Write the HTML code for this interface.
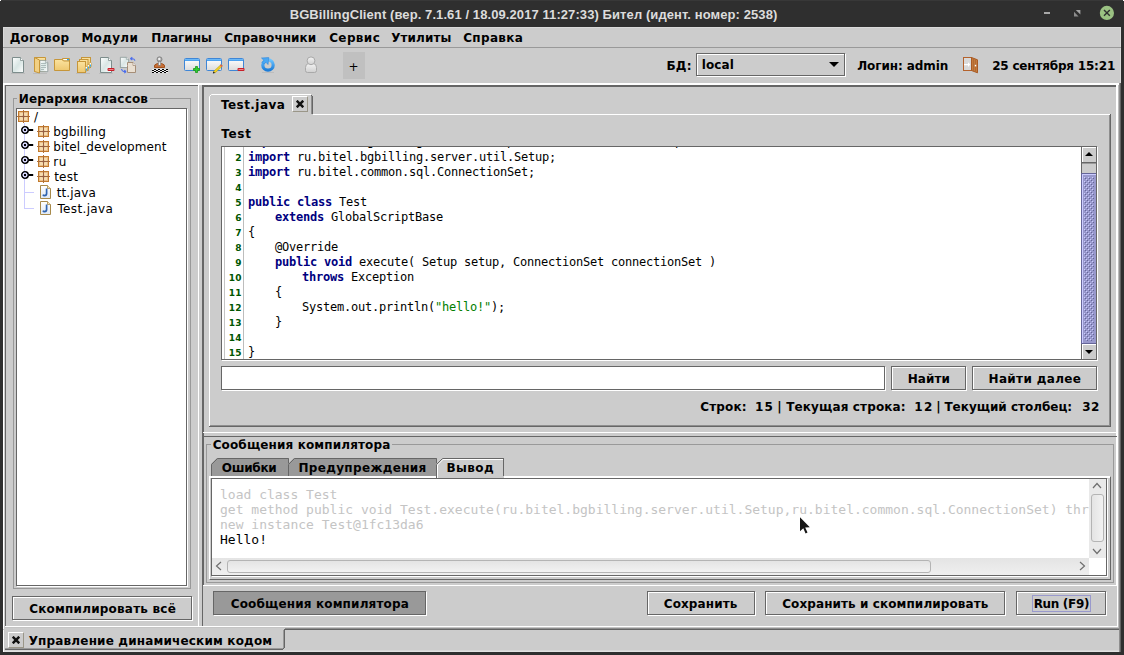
<!DOCTYPE html>
<html><head><meta charset="utf-8"><title>BGBillingClient</title>
<style>
*{box-sizing:border-box;margin:0;padding:0}
html,body{width:1124px;height:655px;overflow:hidden;background:#2f2f2f}
body{position:relative;font-family:"DejaVu Sans","Liberation Sans",sans-serif;font-size:12px;color:#000}
.a{position:absolute}
.t{position:absolute;white-space:pre;line-height:16px;height:16px}
.b{font-weight:bold;letter-spacing:.3px}
.mono{font-family:"DejaVu Sans Mono","Liberation Mono",monospace}
.btn{position:absolute;border:1px solid #666;background:#ccc;box-shadow:inset 1px 1px 0 #fff, 1px 1px 0 #fff;text-align:center;font-weight:bold;letter-spacing:.3px;white-space:pre}
.kw{color:#000080;font-weight:bold}
.str{color:#008000}
.hl{position:absolute;height:1px}
.vl{position:absolute;width:1px}
</style></head><body>
<div class="t" id="t0" style="left:289.68px;top:7px;letter-spacing:0.087px;font-size:13px;font-weight:bold;font-family:'Liberation Sans',sans-serif;color:#dcdcdc;">BGBillingClient (вер. 7.1.61 / 18.09.2017 11:27:33) Бител (идент. номер: 2538)</div>
<div class="a" style="left:1044px;top:12px;width:6px;height:2px;background:#a8a8a8"></div>
<svg class="a" style="left:1074px;top:10px" width="7" height="7" viewBox="0 0 7 7"><path d="M1.800 0H6.400V4.600Z" fill="#a4a4a4"/><path d="M0 1.800V6.400H4.600Z" fill="#8c8c8c"/></svg>
<svg class="a" style="left:1099px;top:5px" width="16" height="16" viewBox="0 0 16 16"><circle cx="7.900" cy="7.900" r="7.100" fill="#9ac182"/><path d="M5 5L10.800 10.800M10.800 5L5 10.800" stroke="#2f2f2f" stroke-width="1.400"/></svg>
<div class="a" style="left:0px;top:0px;width:1px;height:1px;background:#fff"></div>
<div class="a" style="left:1123px;top:0px;width:1px;height:1px;background:#fff"></div>
<div class="a" style="left:1px;top:0px;width:1122px;height:1px;background:#383838"></div>
<div class="a" style="left:3px;top:27px;width:1118px;height:625px;background:#ccc"></div>
<div class="a" style="left:3px;top:27px;width:1118px;height:1px;background:#d9d9d9"></div>
<div class="a" style="left:3px;top:27px;width:1px;height:56px;background:#d9d9d9"></div>
<div class="a" style="left:1120px;top:27px;width:1px;height:56px;background:#d9d9d9"></div>
<div class="a" style="left:3px;top:47px;width:1118px;height:1px;background:#999"></div>
<div class="t" id="t1" style="left:9.68px;top:30px;letter-spacing:0.237px;font-size:12px;font-weight:bold;">Договор</div>
<div class="t" id="t2" style="left:81.38px;top:30px;letter-spacing:0.307px;font-size:12px;font-weight:bold;">Модули</div>
<div class="t" id="t3" style="left:151.22px;top:30px;letter-spacing:-0.032px;font-size:12px;font-weight:bold;">Плагины</div>
<div class="t" id="t4" style="left:224.18px;top:30px;letter-spacing:0.098px;font-size:12px;font-weight:bold;">Справочники</div>
<div class="t" id="t5" style="left:329.18px;top:30px;letter-spacing:0.389px;font-size:12px;font-weight:bold;">Сервис</div>
<div class="t" id="t6" style="left:391.22px;top:30px;letter-spacing:0.073px;font-size:12px;font-weight:bold;">Утилиты</div>
<div class="t" id="t7" style="left:463.22px;top:30px;letter-spacing:0.329px;font-size:12px;font-weight:bold;">Справка</div>
<svg class="a" style="left:0;top:48px" width="1124" height="35" viewBox="0 48 1124 35">
<defs>
<linearGradient id="gd" x1="0" y1="0" x2="1" y2="1"><stop offset="0" stop-color="#fff"/><stop offset=".5" stop-color="#d9e6e4"/><stop offset="1" stop-color="#fff"/></linearGradient>
<linearGradient id="gf" x1="0" y1="0" x2="0" y2="1"><stop offset="0" stop-color="#fbe3a0"/><stop offset="1" stop-color="#eec870"/></linearGradient>
<linearGradient id="gw" x1="0" y1="0" x2="0" y2="1"><stop offset="0" stop-color="#fff"/><stop offset="1" stop-color="#dcdcdc"/></linearGradient>
<linearGradient id="gb" x1="0" y1="0" x2="0" y2="1"><stop offset="0" stop-color="#7cc4fb"/><stop offset="1" stop-color="#3c96ea"/></linearGradient>
<linearGradient id="gu" x1="0" y1="0" x2="0" y2="1"><stop offset="0" stop-color="#f4f4f4"/><stop offset="1" stop-color="#cfcfcf"/></linearGradient>
<linearGradient id="gr" x1="0" y1="0" x2="0" y2="1"><stop offset="0" stop-color="#6cc4ff"/><stop offset="1" stop-color="#1c7cd8"/></linearGradient>
<g id="doc"><path d="M0.5 0.5H8.5L11.5 3.5V15.5H0.5Z" fill="url(#gd)" stroke="#7d8d8c"/><path d="M8.5 0.5V3.5H11.5" fill="#fff" stroke="#7d8d8c" stroke-width=".8"/></g>
<g id="win"><rect x="0.5" y="0.5" width="15" height="12" rx="1" fill="url(#gw)" stroke="#3f86d6"/><path d="M1 1H15V3H1Z" fill="url(#gb)"/></g>
<g id="minus"><rect x="0" y="0" width="7" height="3" rx="1" fill="#c81e28"/><rect x="1" y="1" width="5" height="1" fill="#f08088"/></g>
</defs>
<!-- shadows -->
<g fill="#9a9a9a" opacity=".3"><rect x="11" y="73" width="14" height="1"/><rect x="33" y="73" width="14" height="1"/><rect x="99" y="73" width="14" height="1"/><rect x="76" y="73" width="14" height="1"/><rect x="262" y="72" width="12" height="1"/></g>
<!-- 1 new doc -->
<use href="#doc" x="12" y="57"/>
<!-- 2 folder with doc -->
<path d="M34.5 57.5H45.5V71.5H34.5Z" fill="url(#gf)" stroke="#c6963a"/>
<g transform="translate(39.5,60) scale(.72,.75)"><use href="#doc"/></g>
<path d="M41 63.5H46M41 65.5H46M41 67.5H46M41 69.5H44" stroke="#9fb0b0" stroke-width=".8"/>
<path d="M34.5 57.5L39.5 60V73L34.5 71.5Z" fill="#f2d083" stroke="#c6963a"/>
<!-- 3 folder -->
<path d="M62.5 58.5H69.5V61H62.5Z" fill="#f4d890" stroke="#c6963a"/>
<rect x="63.5" y="59" width="4" height="1.4" fill="#fff"/><rect x="67" y="59" width="2" height="1.4" fill="#28a8f0"/>
<path d="M54.5 59.5H62L63.5 61H69.5V70.5H54.5Z" fill="url(#gf)" stroke="#c6963a"/>
<!-- 4 stacked folders -->
<rect x="81.500" y="57.500" width="9" height="10" fill="url(#gf)" stroke="#c6963a"/>
<rect x="89.300" y="62.500" width="2" height="4.500" rx=".8" fill="#f4d890" stroke="#c6963a" stroke-width=".6"/><rect x="89.800" y="63" width="1.200" height="1.800" fill="#fff"/><rect x="89.800" y="64.600" width="1.200" height="2" fill="#28a8f0"/>
<rect x="79.500" y="59.500" width="8.500" height="11" fill="url(#gf)" stroke="#c6963a"/>
<rect x="87.300" y="64.500" width="2" height="4.500" rx=".8" fill="#f4d890" stroke="#c6963a" stroke-width=".6"/><rect x="87.800" y="65" width="1.200" height="1.800" fill="#fff"/><rect x="87.800" y="66.600" width="1.200" height="2" fill="#28a8f0"/>
<rect x="77.500" y="61.500" width="8" height="11" fill="url(#gf)" stroke="#c6963a"/>
<rect x="85.300" y="66.500" width="2" height="4.500" rx=".8" fill="#f4d890" stroke="#c6963a" stroke-width=".6"/><rect x="85.800" y="67" width="1.200" height="1.800" fill="#fff"/><rect x="85.800" y="68.600" width="1.200" height="2" fill="#28a8f0"/>
<!-- 5 doc minus -->
<use href="#doc" x="100" y="57"/>
<use href="#minus" x="107.500" y="68"/>
<!-- 6 two docs arrows -->
<g transform="translate(120,57) scale(.75,.68)"><use href="#doc"/></g>
<path d="M127.500 65.500V72.500H135.500V65.500L133 62.500H127.500Z" fill="#e9dfd1" stroke="#a58e78"/>
<path d="M133 62.500V65.500H135.500" fill="#fff" stroke="#a58e78" stroke-width=".8"/>
<path d="M130.500 58.600Q134.300 58 135 60.600M130.300 58.600L132.300 57.200M130.300 58.600L132.300 60" fill="none" stroke="#4a6cec" stroke-width="1.100"/>
<path d="M121.500 69Q122 72 126 71.600M126.200 71.600L124.300 70.100M126.200 71.600L124.300 73.100" fill="none" stroke="#4a6cec" stroke-width="1.100"/>
<!-- 7 stamp -->
<path d="M154.500 67.500V66Q154.500 64.600 156 64.200L157.500 63.500H161.500L163 64.200Q164.500 64.600 164.500 66V67.500Z" fill="#c87038" stroke="#a0501c"/>
<rect x="158.200" y="60" width="2.600" height="5.300" fill="#c4c4c4" stroke="#808080" stroke-width=".6"/>
<rect x="159" y="60" width=".9" height="5" fill="#f4f4f4"/>
<circle cx="159.500" cy="59.300" r="2.500" fill="#a4a4a4" stroke="#7c7c7c" stroke-width=".8"/>
<circle cx="159.300" cy="58.900" r="1.200" fill="#f0f0f0"/>
<g fill="#000"><rect x="152" y="69" width="16" height="4" fill="#eee"/>
<path d="M152 70h2v-1h2v1h2v-1h2v1h2v-1h2v1h2v-1h2v1h-2v1h-2v-1h-2v1h-2v-1h-2v1h-2v-1h-2v1h-2z"/>
<path d="M152 72h2v-1h2v1h2v-1h2v1h2v-1h2v1h2v-1h2v1h-2v1h-2v-1h-2v1h-2v-1h-2v1h-2v-1h-2v1h-2z"/></g>
<!-- 8 window plus -->
<use href="#win" x="184" y="58"/>
<path d="M195.500 66.500H197.500V68.500H199.500V70.500H197.500V72.500H195.500V70.500H193.500V68.500H195.500Z" fill="#2ed02e" stroke="#1a961a" stroke-width=".8"/>
<!-- 9 window pencil -->
<use href="#win" x="206" y="58"/>
<path d="M221 64.500L222.500 66L215 73L213.500 71.500Z" fill="#f0d020" stroke="#a89018" stroke-width=".5"/>
<path d="M220 65.500L221 64.500L222.500 66L221.500 67Z" fill="#e04858"/>
<path d="M213.500 71.500L215 73L212.800 73.600Z" fill="#111"/>
<!-- 10 window minus -->
<use href="#win" x="228" y="58"/>
<use href="#minus" x="237.500" y="68"/>
<!-- 11 refresh -->
<circle cx="268" cy="65" r="5.200" fill="none" stroke="url(#gr)" stroke-width="3.200"/>
<path d="M261 57.500H268.500V65Z" fill="#ccc"/>
<path d="M261.500 58L268.800 57.600L268 64.500L266 62.300L263.800 64.200L262 62.400L263.900 60.300Z" fill="#4aa8f4" stroke="#2c84da" stroke-width=".6"/>
<!-- 12 user -->
<path d="M305.500 70.500V67.500Q305.500 64 308.500 63.500H313.500Q316.500 64 316.500 67.500V70.500Q316.500 72.500 314.500 72.500H307.500Q305.500 72.500 305.500 70.500Z" fill="url(#gu)" stroke="#a9a9a9"/>
<circle cx="311" cy="60.800" r="3.900" fill="url(#gu)" stroke="#a9a9a9"/>
<!-- door -->
<rect x="963.500" y="57.500" width="8" height="13" fill="#d9d9d9" stroke="#b4622c"/>
<path d="M964 64H968V62.300L970.300 64.600L968 66.900V65.300H964Z" fill="#fff"/>
<path d="M971.500 57.500L977.500 59.800V72.800L971.500 70.500Z" fill="#c47a3c" stroke="#a85a24"/>
<path d="M973.500 59V70.700M975.500 59.800V71.400" stroke="#a96430" stroke-width=".7"/>
<rect x="974.800" y="64.800" width="1.400" height="1.600" fill="#fff"/>
</svg>
<div class="a" style="left:343px;top:52px;width:22px;height:27px;background:#c0c0c0"></div>
<div class="t" id="t8" style="left:348.50px;top:59px;letter-spacing:0.000px;font-size:12px;">+</div>
<div class="t" id="t9" style="left:666.38px;top:58px;letter-spacing:0.300px;font-size:12px;font-weight:bold;">БД:</div>
<div class="a" style="left:696px;top:53px;width:149px;height:23px;border:1px solid #666;box-shadow:inset 1px 1px 0 #fff,1px 1px 0 #fff"></div>
<div class="t" id="t10" style="left:701.68px;top:57px;letter-spacing:0.103px;font-size:12px;font-weight:bold;">local</div>
<svg class="a" style="left:829px;top:62px" width="10" height="5" viewBox="0 0 10 5"><path d="M0 0H10L5 5Z" fill="#000"/></svg>
<div class="t" id="t11" style="left:857.14px;top:58px;letter-spacing:-0.076px;font-size:12px;font-weight:bold;">Логин: admin</div>
<div class="t" id="t12" style="left:992.14px;top:58px;letter-spacing:-0.188px;font-size:12px;font-weight:bold;">25 сентября 15:21</div>
<div class="a" style="left:3px;top:83px;width:1118px;height:2px;background:#fff"></div>
<div class="a" style="left:3px;top:83px;width:1px;height:546px;background:#fff"></div>
<div class="a" style="left:5px;top:85px;width:1px;height:541px;background:#666"></div>
<div class="a" style="left:5px;top:85px;width:193px;height:1px;background:#666"></div>
<div class="a" style="left:198px;top:85px;width:1px;height:541px;background:#fff"></div>
<div class="a" style="left:5px;top:626px;width:1113px;height:1px;background:#fff"></div>
<div class="a" style="left:5px;top:627px;width:1113px;height:1px;background:#c4c4c4"></div>
<div class="a" style="left:1118px;top:85px;width:1px;height:543px;background:#bbb"></div>
<div class="a" style="left:1119px;top:83px;width:1px;height:569px;background:#8e8e8e"></div>
<div class="a" style="left:1120px;top:83px;width:1px;height:569px;background:#636363"></div>
<div class="a" style="left:13px;top:98px;width:178px;height:491px;border:1px solid #999"></div>
<div class="t" id="t13" style="left:18.68px;top:91px;letter-spacing:0.180px;font-size:12px;font-weight:bold;background:#ccc;padding:0 2px;margin-left:-2px">Иерархия классов</div>
<div class="a" style="left:16px;top:108px;width:171px;height:478px;background:#fff;border:1px solid #666;box-shadow:1px 1px 0 #fff"></div>
<div class="a" style="left:24px;top:123px;width:1px;height:86px;background:#ccf"></div>
<div class="a" style="left:24px;top:192px;width:10px;height:1px;background:#ccf"></div>
<div class="a" style="left:24px;top:208px;width:10px;height:1px;background:#ccf"></div>
<svg class="a" style="left:17px;top:110px" width="13" height="13" viewBox="0 0 13 13"><rect x="1.5" y="1.5" width="10" height="10" fill="#f6dcae" stroke="#c27a2c"/><rect x="2.5" y="2.5" width="8" height="8" fill="none" stroke="#e9bd85" stroke-width="1"/><path d="M6.500 0V13M0 6.500H13" stroke="#b0713a" stroke-width="1"/><path d="M6.500 2V11M2 6.500H11" stroke="#8c5a45" stroke-width="1" opacity=".55"/><rect x="5.500" y="5.500" width="2" height="2" fill="#8c5a45" opacity=".5"/></svg>
<div class="t" id="t14" style="left:34.00px;top:109px;letter-spacing:0.000px;font-size:12px;">/</div>
<svg class="a" style="left:21px;top:126px" width="13" height="9" viewBox="0 0 13 9"><circle cx="4" cy="4" r="3.200" fill="#ccf" stroke="#000" stroke-width="1.600"/><circle cx="4" cy="4" r="2.100" fill="none" stroke="#e6e6ff" stroke-width=".7"/><rect x="3" y="3" width="2" height="2" fill="#000"/><rect x="7.500" y="3" width="4.700" height="2" fill="#000"/></svg>
<svg class="a" style="left:37px;top:125px" width="13" height="13" viewBox="0 0 13 13"><rect x="1.5" y="1.5" width="10" height="10" fill="#f6dcae" stroke="#c27a2c"/><rect x="2.5" y="2.5" width="8" height="8" fill="none" stroke="#e9bd85" stroke-width="1"/><path d="M6.500 0V13M0 6.500H13" stroke="#b0713a" stroke-width="1"/><path d="M6.500 2V11M2 6.500H11" stroke="#8c5a45" stroke-width="1" opacity=".55"/><rect x="5.500" y="5.500" width="2" height="2" fill="#8c5a45" opacity=".5"/></svg>
<div class="t" id="t15" style="left:53.34px;top:124px;letter-spacing:0.132px;font-size:12px;">bgbilling</div>
<svg class="a" style="left:21px;top:141px" width="13" height="9" viewBox="0 0 13 9"><circle cx="4" cy="4" r="3.200" fill="#ccf" stroke="#000" stroke-width="1.600"/><circle cx="4" cy="4" r="2.100" fill="none" stroke="#e6e6ff" stroke-width=".7"/><rect x="3" y="3" width="2" height="2" fill="#000"/><rect x="7.500" y="3" width="4.700" height="2" fill="#000"/></svg>
<svg class="a" style="left:37px;top:140px" width="13" height="13" viewBox="0 0 13 13"><rect x="1.5" y="1.5" width="10" height="10" fill="#f6dcae" stroke="#c27a2c"/><rect x="2.5" y="2.5" width="8" height="8" fill="none" stroke="#e9bd85" stroke-width="1"/><path d="M6.500 0V13M0 6.500H13" stroke="#b0713a" stroke-width="1"/><path d="M6.500 2V11M2 6.500H11" stroke="#8c5a45" stroke-width="1" opacity=".55"/><rect x="5.500" y="5.500" width="2" height="2" fill="#8c5a45" opacity=".5"/></svg>
<div class="t" id="t16" style="left:53.34px;top:139px;letter-spacing:0.102px;font-size:12px;">bitel_development</div>
<svg class="a" style="left:21px;top:156px" width="13" height="9" viewBox="0 0 13 9"><circle cx="4" cy="4" r="3.200" fill="#ccf" stroke="#000" stroke-width="1.600"/><circle cx="4" cy="4" r="2.100" fill="none" stroke="#e6e6ff" stroke-width=".7"/><rect x="3" y="3" width="2" height="2" fill="#000"/><rect x="7.500" y="3" width="4.700" height="2" fill="#000"/></svg>
<svg class="a" style="left:37px;top:155px" width="13" height="13" viewBox="0 0 13 13"><rect x="1.5" y="1.5" width="10" height="10" fill="#f6dcae" stroke="#c27a2c"/><rect x="2.5" y="2.5" width="8" height="8" fill="none" stroke="#e9bd85" stroke-width="1"/><path d="M6.500 0V13M0 6.500H13" stroke="#b0713a" stroke-width="1"/><path d="M6.500 2V11M2 6.500H11" stroke="#8c5a45" stroke-width="1" opacity=".55"/><rect x="5.500" y="5.500" width="2" height="2" fill="#8c5a45" opacity=".5"/></svg>
<div class="t" id="t17" style="left:53.34px;top:154px;letter-spacing:0.433px;font-size:12px;">ru</div>
<svg class="a" style="left:21px;top:171px" width="13" height="9" viewBox="0 0 13 9"><circle cx="4" cy="4" r="3.200" fill="#ccf" stroke="#000" stroke-width="1.600"/><circle cx="4" cy="4" r="2.100" fill="none" stroke="#e6e6ff" stroke-width=".7"/><rect x="3" y="3" width="2" height="2" fill="#000"/><rect x="7.500" y="3" width="4.700" height="2" fill="#000"/></svg>
<svg class="a" style="left:37px;top:170px" width="13" height="13" viewBox="0 0 13 13"><rect x="1.5" y="1.5" width="10" height="10" fill="#f6dcae" stroke="#c27a2c"/><rect x="2.5" y="2.5" width="8" height="8" fill="none" stroke="#e9bd85" stroke-width="1"/><path d="M6.500 0V13M0 6.500H13" stroke="#b0713a" stroke-width="1"/><path d="M6.500 2V11M2 6.500H11" stroke="#8c5a45" stroke-width="1" opacity=".55"/><rect x="5.500" y="5.500" width="2" height="2" fill="#8c5a45" opacity=".5"/></svg>
<div class="t" id="t18" style="left:54.14px;top:169px;letter-spacing:0.278px;font-size:12px;">test</div>
<svg class="a" style="left:40px;top:185px" width="12" height="15" viewBox="0 0 12 15"><defs><linearGradient id="jg185" x1="0" y1="0" x2="0" y2="1"><stop offset="0" stop-color="#fff"/><stop offset="1" stop-color="#dfe8f5"/></linearGradient></defs><path d="M0.5 0.5H7.5L10.5 3.5V13.5H0.5Z" fill="url(#jg185)" stroke="#a88a4a"/><path d="M7.5 0.5V3.5H10.5" fill="#f4e6c0" stroke="#a88a4a" stroke-width=".8"/><path d="M6.6 3.6V8.6Q6.6 10.6 4.6 10.6Q3.4 10.6 3 9.6" fill="none" stroke="#2f64b0" stroke-width="1.7"/></svg>
<div class="t" id="t19" style="left:56.68px;top:185px;letter-spacing:0.128px;font-size:12px;">tt.java</div>
<svg class="a" style="left:40px;top:201px" width="12" height="15" viewBox="0 0 12 15"><defs><linearGradient id="jg201" x1="0" y1="0" x2="0" y2="1"><stop offset="0" stop-color="#fff"/><stop offset="1" stop-color="#dfe8f5"/></linearGradient></defs><path d="M0.5 0.5H7.5L10.5 3.5V13.5H0.5Z" fill="url(#jg201)" stroke="#a88a4a"/><path d="M7.5 0.5V3.5H10.5" fill="#f4e6c0" stroke="#a88a4a" stroke-width=".8"/><path d="M6.6 3.6V8.6Q6.6 10.6 4.6 10.6Q3.4 10.6 3 9.6" fill="none" stroke="#2f64b0" stroke-width="1.7"/></svg>
<div class="t" id="t20" style="left:57.48px;top:201px;letter-spacing:0.343px;font-size:12px;">Test.java</div>
<div class="a" style="left:12px;top:596px;width:180px;height:24px;border:1px solid #666;background:#ccc;box-shadow:inset 1px 1px 0 #fff,1px 1px 0 #fff"></div>
<div class="t" id="t21" style="left:29.18px;top:601px;letter-spacing:0.214px;font-size:12px;font-weight:bold;">Скомпилировать всё</div>
<div class="a" style="left:202px;top:85px;width:914px;height:2px;background:#666"></div>
<div class="a" style="left:202px;top:85px;width:2px;height:500px;background:#666"></div>
<div class="a" style="left:202px;top:585px;width:1px;height:41px;background:#666"></div>
<div class="a" style="left:1116px;top:85px;width:2px;height:501px;background:#fff"></div>
<div class="a" style="left:1117px;top:586px;width:1px;height:41px;background:#fff"></div>
<div class="a" style="left:203px;top:585px;width:915px;height:1px;background:#fff"></div>
<div class="a" style="left:212px;top:94px;width:99px;height:1px;background:#fff"></div>
<div class="a" style="left:209px;top:97px;width:1px;height:329px;background:#fff"></div>
<svg class="a" style="left:209px;top:94px" width="4" height="4" viewBox="0 0 4 4"><path d="M0.5 4V2.5L2.5 0.5H4" fill="none" stroke="#fff"/></svg>
<div class="a" style="left:311px;top:96px;width:1px;height:18px;background:#8e8e8e"></div>
<div class="a" style="left:312px;top:96px;width:1px;height:18px;background:#666"></div>
<div class="a" style="left:311px;top:95px;width:1px;height:1px;background:#666"></div>
<div class="a" style="left:313px;top:114px;width:797px;height:1px;background:#fff"></div>
<div class="a" style="left:1109px;top:115px;width:1px;height:311px;background:#8e8e8e"></div>
<div class="a" style="left:1110px;top:114px;width:1px;height:313px;background:#666"></div>
<div class="a" style="left:210px;top:425px;width:900px;height:1px;background:#8e8e8e"></div>
<div class="a" style="left:209px;top:426px;width:902px;height:1px;background:#666"></div>
<div class="t" id="t22" style="left:221.02px;top:97px;letter-spacing:0.431px;font-size:12px;font-weight:bold;">Test.java</div>
<div class="a" style="left:292px;top:96px;width:16px;height:16px;border:1px solid;border-color:#fff #9a9688 #9a9688 #fff"></div>
<svg class="a" style="left:296px;top:100px" width="8" height="8" viewBox="0 0 8 8"><path d="M1.600 1.600L6.400 6.400M6.400 1.600L1.600 6.400" stroke="#111" stroke-width="2.500" stroke-linecap="square"/><rect x="2.800" y="2.800" width="2.400" height="2.400" fill="#111"/></svg>
<div class="t" id="t23" style="left:221.14px;top:126px;letter-spacing:0.744px;font-size:12px;font-weight:bold;">Test</div>
<div class="a" style="left:221px;top:146px;width:876px;height:214px;background:#fff;border:1px solid #666;box-shadow:1px 1px 0 #fff"></div>
<div class="a mono" style="left:222px;top:147px;width:859px;height:212px;overflow:hidden;font-size:12px;letter-spacing:-0.224px">
<div class="a" style="left:21px;top:0;width:1px;height:212px;background:#bdbdbd"></div>
<div class="a" style="left:2px;top:0;width:1px;height:212px;background:#c4c4c4"></div>
<div class="t" style="left:26px;top:-13px;line-height:15px;height:15px"><span class="kw">import</span> ru.bitel.bgbilling.kernel.script.server.dev.GlobalScriptBase;</div>
<div class="t" style="left:26px;top:3px;line-height:15px;height:15px"><span class="kw">import</span> ru.bitel.bgbilling.server.util.Setup;</div>
<div class="t" style="left:0;width:20px;top:3px;line-height:15px;height:15px;text-align:right;font:bold 9px 'DejaVu Sans',sans-serif;line-height:15px;letter-spacing:0.4px;color:#005500;padding-top:1px">2</div>
<div class="t" style="left:26px;top:18px;line-height:15px;height:15px"><span class="kw">import</span> ru.bitel.common.sql.ConnectionSet;</div>
<div class="t" style="left:0;width:20px;top:18px;line-height:15px;height:15px;text-align:right;font:bold 9px 'DejaVu Sans',sans-serif;line-height:15px;letter-spacing:0.4px;color:#005500;padding-top:1px">3</div>
<div class="t" style="left:26px;top:33px;line-height:15px;height:15px"></div>
<div class="t" style="left:0;width:20px;top:33px;line-height:15px;height:15px;text-align:right;font:bold 9px 'DejaVu Sans',sans-serif;line-height:15px;letter-spacing:0.4px;color:#005500;padding-top:1px">4</div>
<div class="t" style="left:26px;top:48px;line-height:15px;height:15px"><span class="kw">public</span> <span class="kw">class</span> Test</div>
<div class="t" style="left:0;width:20px;top:48px;line-height:15px;height:15px;text-align:right;font:bold 9px 'DejaVu Sans',sans-serif;line-height:15px;letter-spacing:0.4px;color:#005500;padding-top:1px">5</div>
<div class="t" style="left:26px;top:63px;line-height:15px;height:15px"><span style="display:inline-block;width:27px"></span><span class="kw">extends</span> GlobalScriptBase</div>
<div class="t" style="left:0;width:20px;top:63px;line-height:15px;height:15px;text-align:right;font:bold 9px 'DejaVu Sans',sans-serif;line-height:15px;letter-spacing:0.4px;color:#005500;padding-top:1px">6</div>
<div class="t" style="left:26px;top:78px;line-height:15px;height:15px">{</div>
<div class="t" style="left:0;width:20px;top:78px;line-height:15px;height:15px;text-align:right;font:bold 9px 'DejaVu Sans',sans-serif;line-height:15px;letter-spacing:0.4px;color:#005500;padding-top:1px">7</div>
<div class="t" style="left:26px;top:93px;line-height:15px;height:15px"><span style="display:inline-block;width:27px"></span>@Override</div>
<div class="t" style="left:0;width:20px;top:93px;line-height:15px;height:15px;text-align:right;font:bold 9px 'DejaVu Sans',sans-serif;line-height:15px;letter-spacing:0.4px;color:#005500;padding-top:1px">8</div>
<div class="t" style="left:26px;top:108px;line-height:15px;height:15px"><span style="display:inline-block;width:27px"></span><span class="kw">public</span> <span class="kw">void</span> execute( Setup setup, ConnectionSet connectionSet )</div>
<div class="t" style="left:0;width:20px;top:108px;line-height:15px;height:15px;text-align:right;font:bold 9px 'DejaVu Sans',sans-serif;line-height:15px;letter-spacing:0.4px;color:#005500;padding-top:1px">9</div>
<div class="t" style="left:26px;top:123px;line-height:15px;height:15px"><span style="display:inline-block;width:27px"></span><span style="display:inline-block;width:27px"></span><span class="kw">throws</span> Exception</div>
<div class="t" style="left:0;width:20px;top:123px;line-height:15px;height:15px;text-align:right;font:bold 9px 'DejaVu Sans',sans-serif;line-height:15px;letter-spacing:0.4px;color:#005500;padding-top:1px">10</div>
<div class="t" style="left:26px;top:138px;line-height:15px;height:15px"><span style="display:inline-block;width:27px"></span>{</div>
<div class="t" style="left:0;width:20px;top:138px;line-height:15px;height:15px;text-align:right;font:bold 9px 'DejaVu Sans',sans-serif;line-height:15px;letter-spacing:0.4px;color:#005500;padding-top:1px">11</div>
<div class="t" style="left:26px;top:153px;line-height:15px;height:15px"><span style="display:inline-block;width:27px"></span><span style="display:inline-block;width:27px"></span>System.out.println(<span class="str">"hello!"</span>);</div>
<div class="t" style="left:0;width:20px;top:153px;line-height:15px;height:15px;text-align:right;font:bold 9px 'DejaVu Sans',sans-serif;line-height:15px;letter-spacing:0.4px;color:#005500;padding-top:1px">12</div>
<div class="t" style="left:26px;top:168px;line-height:15px;height:15px"><span style="display:inline-block;width:27px"></span>}</div>
<div class="t" style="left:0;width:20px;top:168px;line-height:15px;height:15px;text-align:right;font:bold 9px 'DejaVu Sans',sans-serif;line-height:15px;letter-spacing:0.4px;color:#005500;padding-top:1px">13</div>
<div class="t" style="left:26px;top:183px;line-height:15px;height:15px"></div>
<div class="t" style="left:0;width:20px;top:183px;line-height:15px;height:15px;text-align:right;font:bold 9px 'DejaVu Sans',sans-serif;line-height:15px;letter-spacing:0.4px;color:#005500;padding-top:1px">14</div>
<div class="t" style="left:26px;top:198px;line-height:15px;height:15px">}</div>
<div class="t" style="left:0;width:20px;top:198px;line-height:15px;height:15px;text-align:right;font:bold 9px 'DejaVu Sans',sans-serif;line-height:15px;letter-spacing:0.4px;color:#005500;padding-top:1px">15</div>
</div>
<div class="a" style="left:1081px;top:147px;width:16px;height:212px;background:#ccc;border-left:1px solid #666;border-right:1px solid #666"></div>
<div class="a" style="left:1082px;top:147px;width:14px;height:16px;border-bottom:1px solid #666;box-shadow:inset 1px 1px 0 #fff"></div>
<svg class="a" style="left:1085px;top:152px" width="8" height="4" viewBox="0 0 8 4"><path d="M0 4H8L4 0Z" fill="#000"/></svg>
<div class="a" style="left:1082px;top:163px;width:14px;height:1px;background:#999"></div>
<svg class="a" style="left:1081px;top:173px" width="15" height="171" viewBox="0 0 15 171"><defs><pattern id="tp" x="3" y="4" width="4" height="4" patternUnits="userSpaceOnUse"><rect width="4" height="4" fill="#99c"/><rect x="0" y="0" width="1" height="1" fill="#ccf"/><rect x="1" y="1" width="1" height="1" fill="#669"/><rect x="2" y="2" width="1" height="1" fill="#ccf"/><rect x="3" y="3" width="1" height="1" fill="#669"/></pattern></defs><rect x="0" y="0" width="15" height="171" fill="#669"/><rect x="1" y="1" width="14" height="169" fill="#ccf"/><rect x="2" y="2" width="13" height="168" fill="#99c"/><rect x="3" y="4" width="10" height="164" fill="url(#tp)"/></svg>
<div class="a" style="left:1082px;top:344px;width:14px;height:15px;box-shadow:inset 1px 1px 0 #fff"></div>
<svg class="a" style="left:1085px;top:350px" width="8" height="4" viewBox="0 0 8 4"><path d="M0 0H8L4 4Z" fill="#000"/></svg>
<div class="a" style="left:221px;top:366px;width:664px;height:24px;background:#fff;border:1px solid #666;box-shadow:1px 1px 0 #fff"></div>
<div class="a" style="left:891px;top:366px;width:75px;height:24px;border:1px solid #666;background:#ccc;box-shadow:inset 1px 1px 0 #fff,1px 1px 0 #fff"></div>
<div class="t" id="t24" style="left:907.68px;top:371px;letter-spacing:0.055px;font-size:12px;font-weight:bold;">Найти</div>
<div class="a" style="left:972px;top:366px;width:125px;height:24px;border:1px solid #666;background:#ccc;box-shadow:inset 1px 1px 0 #fff,1px 1px 0 #fff"></div>
<div class="t" id="t25" style="left:988.56px;top:371px;letter-spacing:0.341px;font-size:12px;font-weight:bold;">Найти далее</div>
<div class="t" id="t26" style="left:700.18px;top:399px;letter-spacing:0.179px;font-size:12px;font-weight:bold;">Строк:</div>
<div class="t" id="t27" style="left:754.88px;top:399px;letter-spacing:1.237px;font-size:12px;font-weight:bold;">15</div>
<div class="t" id="t28" style="left:777.30px;top:399px;letter-spacing:0.000px;font-size:12px;font-weight:bold;">|</div>
<div class="t" id="t29" style="left:786.14px;top:399px;letter-spacing:0.143px;font-size:12px;font-weight:bold;">Текущая строка:</div>
<div class="t" id="t30" style="left:914.34px;top:399px;letter-spacing:1.237px;font-size:12px;font-weight:bold;">12</div>
<div class="t" id="t31" style="left:936.30px;top:399px;letter-spacing:0.000px;font-size:12px;font-weight:bold;">|</div>
<div class="t" id="t32" style="left:944.44px;top:399px;letter-spacing:-0.010px;font-size:12px;font-weight:bold;">Текущий столбец:</div>
<div class="t" id="t33" style="left:1082.18px;top:399px;letter-spacing:0.437px;font-size:12px;font-weight:bold;">32</div>
<div class="a" style="left:203px;top:432px;width:913px;height:1px;background:#fff"></div>
<div class="a" style="left:203px;top:436px;width:914px;height:1px;background:#666"></div>
<div class="a" style="left:206px;top:444px;width:908px;height:139px;border:1px solid #999"></div>
<div class="t" id="t34" style="left:212.68px;top:437px;letter-spacing:0.135px;font-size:12px;font-weight:bold;background:#ccc;padding:0 2px;margin-left:-2px">Сообщения компилятора</div>
<div class="a" style="left:209px;top:476px;width:902px;height:104px;border:1px solid;border-color:#fff #666 #666 #fff"></div>
<div class="a" style="left:210px;top:477px;width:900px;height:1px;background:#fff"></div>
<svg class="a" style="left:211px;top:458px" width="78" height="18" viewBox="0 0 78 18"><path d="M0 18V6L6 0H78V18Z" fill="#999"/><path d="M0.5 18V6.5L6.5 0.5H77.5V18" fill="none" stroke="#666"/></svg>
<svg class="a" style="left:288px;top:458px" width="149" height="18" viewBox="0 0 149 18"><path d="M0 18V6L6 0H149V18Z" fill="#999"/><path d="M0.5 18V6.5L6.5 0.5H148.5V18" fill="none" stroke="#666"/></svg>
<svg class="a" style="left:436px;top:458px" width="68" height="20" viewBox="0 0 68 20"><path d="M0 20V6L6 0H68V20Z" fill="#ccc"/><path d="M0.5 20V6.5L6.5 0.5H67" fill="none" stroke="#666"/><path d="M1.5 20V7L7 1.5H67" fill="none" stroke="#fff"/><path d="M67.5 0V18" stroke="#666"/></svg>
<div class="t" id="t35" style="left:221.68px;top:460px;letter-spacing:-0.239px;font-size:12px;font-weight:bold;">Ошибки</div>
<div class="t" id="t36" style="left:298.38px;top:460px;letter-spacing:0.340px;font-size:12px;font-weight:bold;">Предупреждения</div>
<div class="t" id="t37" style="left:446.38px;top:460px;letter-spacing:0.467px;font-size:12px;font-weight:bold;">Вывод</div>
<div class="a" style="left:211px;top:478px;width:896px;height:98px;background:#fff;border:1px solid #666;box-shadow:1px 1px 0 #fff"></div>
<div class="a mono" style="left:212px;top:479px;width:877px;height:79px;overflow:hidden;font-size:13px;color:#c4c4c4">
<div class="t" style="left:8px;top:8px;line-height:15px;height:15px">load class Test</div>
<div class="t" style="left:8px;top:23px;line-height:15px;height:15px">get method public void Test.execute(ru.bitel.bgbilling.server.util.Setup,ru.bitel.common.sql.ConnectionSet) throws java.lang.Exception</div>
<div class="t" style="left:8px;top:38px;line-height:15px;height:15px">new instance Test@1fc13da6</div>
<div class="t" style="left:8px;top:53px;line-height:15px;height:15px;color:#000">Hello!</div>
</div>
<div class="a" style="left:1089px;top:479px;width:17px;height:79px;background:#e9e9e9"></div>
<div class="a" style="left:1091px;top:494px;width:13px;height:48px;border:1px solid #b4b4b4;border-radius:3px;background:linear-gradient(90deg,#e4e4e4,#f2f2f2)"></div>
<svg class="a" style="left:1092px;top:482px" width="10" height="7" viewBox="0 0 10 7"><path d="M1 6L5 1.500L9 6" fill="none" stroke="#6e6e6e" stroke-width="1.200"/></svg>
<svg class="a" style="left:1092px;top:548px" width="10" height="7" viewBox="0 0 10 7"><path d="M1 1L5 5.500L9 1" fill="none" stroke="#6e6e6e" stroke-width="1.200"/></svg>
<div class="a" style="left:212px;top:558px;width:877px;height:17px;background:linear-gradient(180deg,#e4e4e4,#efefef)"></div>
<div class="a" style="left:227px;top:560px;width:704px;height:13px;border:1px solid #b4b4b4;border-radius:3px;background:linear-gradient(180deg,#e4e4e4,#f2f2f2)"></div>
<svg class="a" style="left:215px;top:561px" width="7" height="10" viewBox="0 0 7 10"><path d="M6 1L1.500 5L6 9" fill="none" stroke="#6e6e6e" stroke-width="1.200"/></svg>
<svg class="a" style="left:1079px;top:561px" width="7" height="10" viewBox="0 0 7 10"><path d="M1 1L5.500 5L1 9" fill="none" stroke="#6e6e6e" stroke-width="1.200"/></svg>
<div class="a" style="left:213px;top:591px;width:213px;height:24px;border:1px solid #666;background:#999;box-shadow:1px 1px 0 #fff"></div>
<div class="t" id="t38" style="left:230.68px;top:596px;letter-spacing:0.160px;font-size:12px;font-weight:bold;">Сообщения компилятора</div>
<div class="a" style="left:647px;top:591px;width:108px;height:24px;border:1px solid #666;background:#ccc;box-shadow:inset 1px 1px 0 #fff,1px 1px 0 #fff"></div>
<div class="t" id="t39" style="left:663.76px;top:596px;letter-spacing:0.108px;font-size:12px;font-weight:bold;">Сохранить</div>
<div class="a" style="left:765px;top:591px;width:240px;height:24px;border:1px solid #666;background:#ccc;box-shadow:inset 1px 1px 0 #fff,1px 1px 0 #fff"></div>
<div class="t" id="t40" style="left:782.18px;top:596px;letter-spacing:0.095px;font-size:12px;font-weight:bold;">Сохранить и скомпилировать</div>
<div class="a" style="left:1016px;top:591px;width:90px;height:24px;border:1px solid #666;background:#ccc;box-shadow:inset 1px 1px 0 #fff,1px 1px 0 #fff"></div>
<div class="t" id="t41" style="left:1033.68px;top:596px;letter-spacing:-0.330px;font-size:12px;font-weight:bold;">Run (F9)</div>
<div class="a" style="left:1032px;top:595px;width:59px;height:17px;border:1px solid #99c"></div>
<div class="a" style="left:285px;top:628px;width:834px;height:1px;background:#8e8e8e"></div>
<div class="a" style="left:285px;top:629px;width:834px;height:1px;background:#636363"></div>
<div class="a" style="left:283px;top:630px;width:1px;height:18px;background:#999"></div>
<div class="a" style="left:284px;top:629px;width:1px;height:19px;background:#666"></div>
<div class="a" style="left:5px;top:648px;width:278px;height:1px;background:#999"></div>
<div class="a" style="left:5px;top:649px;width:278px;height:1px;background:#666"></div>
<div class="a" style="left:283px;top:648px;width:1px;height:1px;background:#666"></div>
<div class="a" style="left:3px;top:630px;width:1px;height:22px;background:#fff"></div>
<div class="a" style="left:4px;top:650px;width:1115px;height:1px;background:#d6d6d6"></div>
<div class="a" style="left:4px;top:651px;width:1115px;height:1px;background:#e2e2e2"></div>
<div class="a" style="left:8px;top:632px;width:16px;height:16px;border:1px solid;border-color:#fff #9a9688 #9a9688 #fff"></div>
<svg class="a" style="left:12px;top:636px" width="8" height="8" viewBox="0 0 8 8"><path d="M1.600 1.600L6.400 6.400M6.400 1.600L1.600 6.400" stroke="#111" stroke-width="2.500" stroke-linecap="square"/><rect x="2.800" y="2.800" width="2.400" height="2.400" fill="#111"/></svg>
<div class="t" id="t42" style="left:28.68px;top:633px;letter-spacing:0.174px;font-size:12px;font-weight:bold;">Управление динамическим кодом</div>
<svg class="a" style="left:796px;top:514px" width="18" height="23" viewBox="796 514 18 23"><path d="M800 517.300V531.300L803.300 528.300L805.600 533.400L807.500 532.500L805.200 527.600L809.800 527.300Z" fill="#161616" stroke="#fff" stroke-width="1" stroke-linejoin="round" paint-order="stroke"/></svg>
</body></html>
